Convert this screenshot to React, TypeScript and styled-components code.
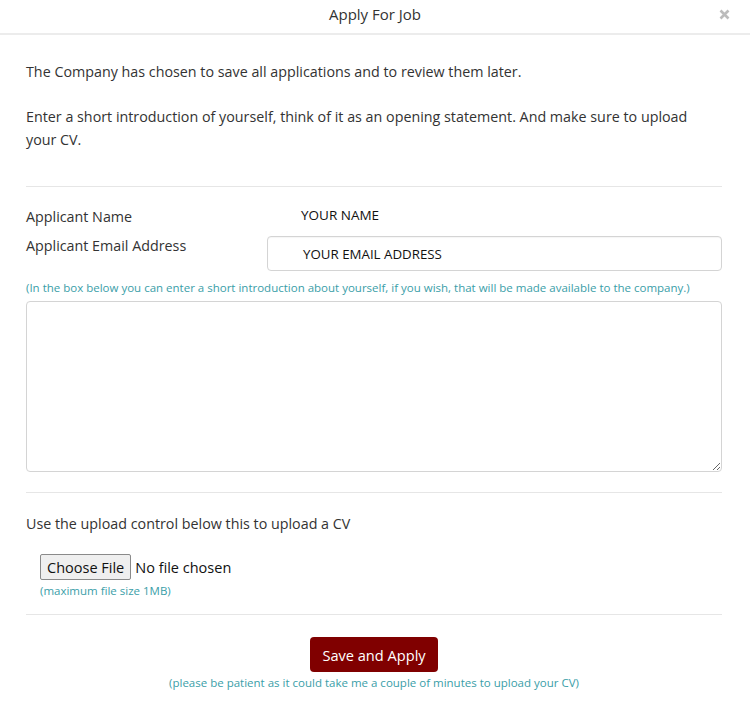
import React from "react";
import styled, { createGlobalStyle } from "styled-components";

const Global = createGlobalStyle`
  html, body { margin: 0; padding: 0; background: #fff; }
  body { font-family: "Open Sans", "Noto Sans", sans-serif; color: #333; }
  * { box-sizing: border-box; }
`;

const Modal = styled.div`
  width: 750px;
  height: 716px;
  background: #fff;
  display: flex;
  flex-direction: column;
`;

const Header = styled.div`
  height: 35px;
  border-bottom: 2px solid #ececec;
  display: flex;
  align-items: center;
  justify-content: center;
  position: relative;
`;

const Title = styled.h4`
  margin: 0;
  font-size: 15px;
  font-weight: 400;
  color: #333;
  line-height: 1;
  margin-top: -4px;
`;

const Close = styled.button`
  position: absolute;
  right: 18px;
  top: 7px;
  width: 15px;
  height: 15px;
  padding: 0;
  border: 0;
  background: none;
  display: flex;
  align-items: center;
  justify-content: center;
  cursor: pointer;
`;

const Body = styled.div`
  padding: 25px 28px 0 26px;
  display: flex;
  flex-direction: column;
`;

const Para = styled.p<{ $mt?: number }>`
  margin: ${(p) => p.$mt ?? 0}px 0 0;
  max-width: 690px;
  font-size: 14.3px;
  line-height: 23px;
  color: #333;
`;

const Rule = styled.hr<{ $mt: number; $mb: number }>`
  border: 0;
  border-top: 1px solid #e6e6e6;
  margin: ${(p) => p.$mt}px 0 ${(p) => p.$mb}px;
  width: 100%;
`;

const Row = styled.div<{ $mt?: number }>`
  display: grid;
  grid-template-columns: 241px 1fr;
  align-items: start;
  margin-top: ${(p) => p.$mt ?? 0}px;
`;

const Label = styled.span`
  font-size: 14.3px;
  line-height: 20px;
  color: #333;
`;

const Value = styled.span`
  font-size: 13.5px;
  line-height: 20px;
  color: #111;
  padding-left: 34px;
  margin-top: -2px;
`;

const Input = styled.div`
  height: 35px;
  border: 1px solid #d4d4d4;
  border-radius: 4px;
  display: flex;
  align-items: center;
  padding-left: 35px;
  font-size: 13.3px;
  color: #111;
  box-shadow: inset 0 1px 1px rgba(0, 0, 0, 0.04);
`;

const Help = styled.div<{ $center?: boolean; $mt?: number; $ml?: number }>`
  font-size: 11.5px;
  color: #3a9ea8;
  line-height: 16px;
  margin-top: ${(p) => p.$mt ?? 0}px;
  margin-left: ${(p) => p.$ml ?? 0}px;
  text-align: ${(p) => (p.$center ? "center" : "left")};
`;

const TextArea = styled.textarea`
  height: 171px;
  width: 100%;
  border: 1px solid #d4d4d4;
  border-radius: 4px;
  resize: vertical;
  margin-top: 5px;
  display: block;
  font-family: inherit;
`;

const FileRow = styled.div`
  display: flex;
  align-items: center;
  margin-left: 14px;
  margin-top: 19px;
`;

const FileButton = styled.span`
  display: inline-flex;
  align-items: center;
  height: 26px;
  padding: 0 6px;
  background: #efefef;
  border: 1px solid #8a8a8a;
  border-radius: 2px;
  font-size: 14.5px;
  color: #111;
`;

const FileText = styled.span`
  font-size: 14.5px;
  color: #111;
  margin-left: 4px;
`;

const Footer = styled.div`
  display: flex;
  flex-direction: column;
  align-items: center;
`;

const SaveButton = styled.button`
  background: #800000;
  color: #fff;
  border: 0;
  border-radius: 4px;
  height: 35px;
  padding: 0 12px;
  font-family: inherit;
  font-size: 14.6px;
`;

export default function App() {
  return (
    <>
      <Global />
      <Modal>
        <Header>
          <Title>Apply For Job</Title>
          <Close aria-label="Close">
            <svg width="11" height="11" viewBox="0 0 11 11">
              <path d="M1.5 1.5 L9.5 9.5 M9.5 1.5 L1.5 9.5" stroke="#bcbcbc" strokeWidth="2.6" strokeLinecap="butt" />
            </svg>
          </Close>
        </Header>
        <Body>
          <Para>The Company has chosen to save all applications and to review them later.</Para>
          <Para $mt={22}>
            Enter a short introduction of yourself, think of it as an opening statement. And make sure to upload
            your CV.
          </Para>
          <Rule $mt={35} $mb={20} />
          <Row>
            <Label>Applicant Name</Label>
            <Value>YOUR NAME</Value>
          </Row>
          <Row $mt={9}>
            <Label>Applicant Email Address</Label>
            <Input>YOUR EMAIL ADDRESS</Input>
          </Row>
          <Help $mt={9}>
            (In the box below you can enter a short introduction about yourself, if you wish, that will be made
            available to the company.)
          </Help>
          <TextArea />
          <Rule $mt={20} $mb={19} />
          <Para>Use the upload control below this to upload a CV</Para>
          <FileRow>
            <FileButton>Choose File</FileButton>
            <FileText>No file chosen</FileText>
          </FileRow>
          <Help $ml={14} $mt={3}>(maximum file size 1MB)</Help>
          <Rule $mt={15} $mb={22} />
          <Footer>
            <SaveButton>Save and Apply</SaveButton>
            <Help $center $mt={3}>
              (please be patient as it could take me a couple of minutes to upload your CV)
            </Help>
          </Footer>
        </Body>
      </Modal>
    </>
  );
}
